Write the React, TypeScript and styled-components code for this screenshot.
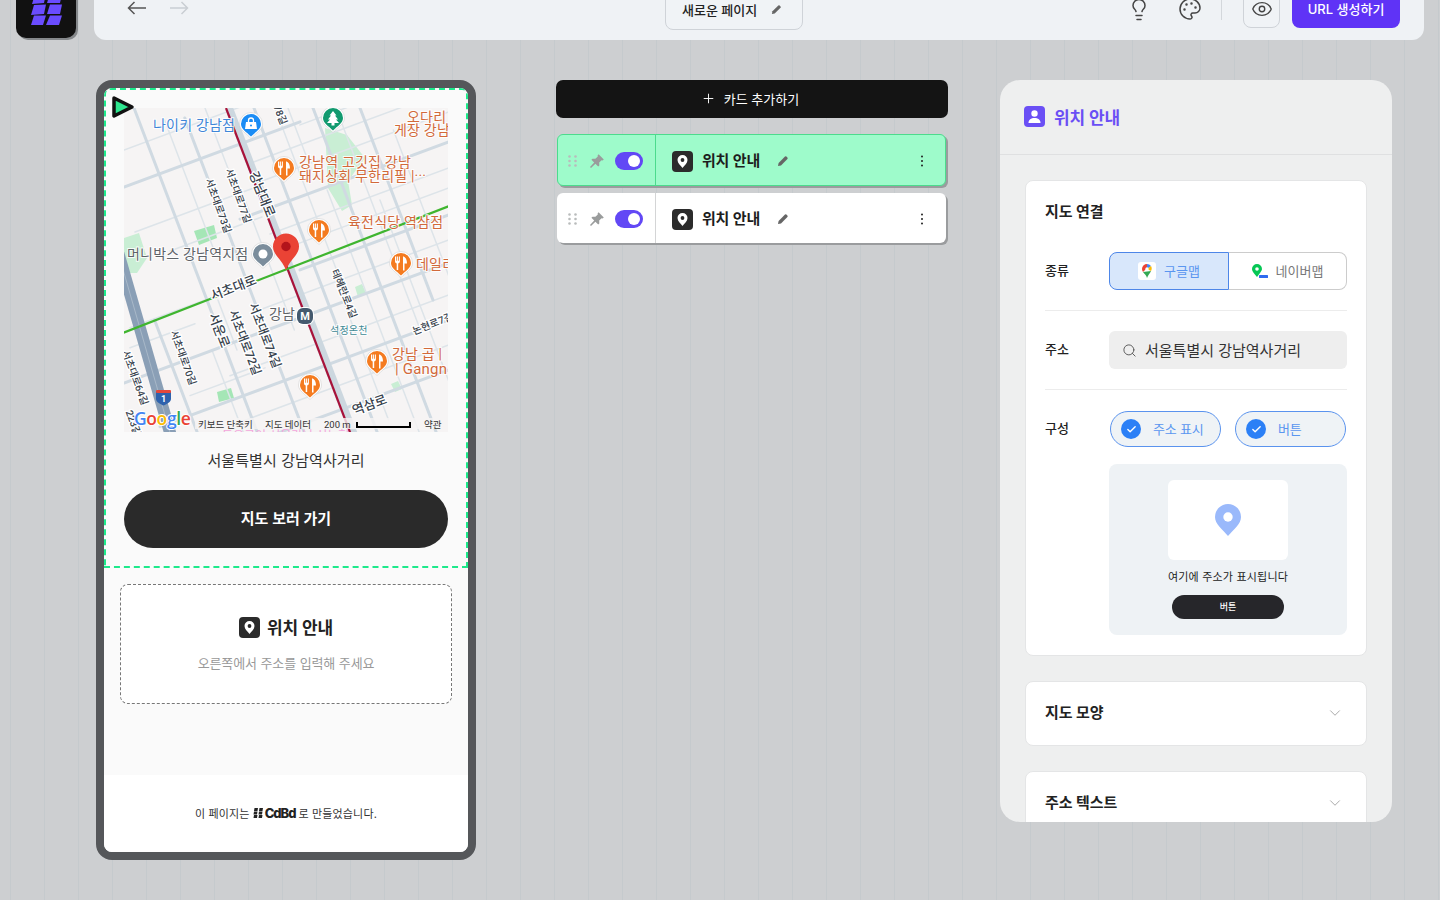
import React from 'react';
import styled, {createGlobalStyle} from 'styled-components';
import {Check, ChevronDown, Eye, Lightbulb, Palette, Plus, Search} from 'lucide-react';

const FONT = `Inter, "Noto Sans CJK KR", "Noto Sans", sans-serif`;
const MAP_FONT = `Roboto, "Noto Sans CJK KR", sans-serif`;

const Global = createGlobalStyle`
  html, body {
    margin: 0;
    padding: 0;
    height: 100%;
    overflow: hidden;
  }
  body {
    font-family: ${FONT};
    color: #222;
  }
  * {
    box-sizing: border-box;
  }
`;

const Page = styled.div`
  width: 1440px;
  height: 900px;
  overflow: hidden;
  background-color: #cdcfd1;
  background-image: linear-gradient(90deg, #c5cacd 1px, transparent 1px);
  background-size: 34px 100%;
  background-position: 10px 0;
`;

const Header = styled.header`
  display: flex;
  gap: 18px;
  height: 60px;
  margin: -20px 16px 0;
`;

const LogoBox = styled.div`
  width: 60px;
  height: 58px;
  flex: none;
  background: #111;
  border-radius: 0 0 10px 10px;
  box-shadow: 2px 2px 0 #85888b;
  svg {
    display: block;
  }
`;

const TopBar = styled.div`
  flex: 1;
  display: flex;
  align-items: flex-start;
  height: 60px;
  padding: 0 24px 0 33px;
  background: #eff2f5;
  border-radius: 0 0 12px 12px;
`;

const Arrows = styled.div`
  display: flex;
  align-items: center;
  gap: 22px;
  width: 62px;
  height: 56px;
  color: #555;
`;

const ArrowGlyph = styled.svg<{$off?: boolean}>`
  flex: none;
  color: ${(p) => (p.$off ? '#c9ced3' : '#555')};
`;

const PageName = styled.button`
  display: flex;
  align-items: center;
  gap: 14px;
  width: 138px;
  height: 50px;
  margin-left: 476px;
  padding: 8px 0 0 16px;
  font: 500 13px ${FONT};
  color: #222;
  background: #f0f3f6;
  border: 1px solid #cfd3d8;
  border-radius: 0 0 8px 8px;
`;

const TopActions = styled.div`
  display: flex;
  align-items: flex-start;
  margin-left: auto;
`;

const ToolSlot = styled.div`
  display: flex;
  align-items: center;
  justify-content: center;
  width: 24px;
  height: 58px;
  margin-right: 27px;
  color: #444;
`;

const ToolDivider = styled.div`
  width: 1px;
  height: 40px;
  margin: 0 21px 0 -8px;
  background: #d3d7db;
`;

const EyeButton = styled.button`
  display: flex;
  align-items: center;
  justify-content: center;
  width: 37px;
  height: 48px;
  padding: 9px 0 0;
  margin-right: 12px;
  color: #444;
  background: #f0f3f6;
  border: 1px solid #cfd3d8;
  border-radius: 0 0 8px 8px;
`;

const UrlButton = styled.button`
  width: 108px;
  height: 48px;
  padding: 8px 0 0;
  font: 500 13px ${FONT};
  color: #fff;
  background: #5f33f6;
  border: 0;
  border-radius: 0 0 8px 8px;
`;

const Workspace = styled.main`
  display: flex;
  align-items: flex-start;
  margin-top: 40px;
  padding-left: 96px;
`;

const LiftedText = styled.span`
  margin-bottom: 2px;
`;

/* phone preview */
const Phone = styled.section`
  display: flex;
  flex-direction: column;
  flex: none;
  width: 380px;
  height: 780px;
  border: 8px solid #55575a;
  border-radius: 16px;
  background: #fafafa;
  overflow: hidden;
`;

const SelectedBlock = styled.div`
  position: relative;
  display: flex;
  flex-direction: column;
  align-items: center;
  height: 480px;
  padding: 18px 18px 0;
  border: 2px dashed #1de98b;
  border-radius: 6px 6px 0 0;
`;

const Handle = styled.svg`
  position: absolute;
  left: 5px;
  top: 5px;
`;

const MapFrame = styled.svg`
  display: block;
  flex: none;
  width: 324px;
  height: 324px;
  background: #f6f4f4;
`;

const PoiText = styled.text<{$c: string; $s?: number}>`
  font-family: ${MAP_FONT};
  font-size: ${(p) => p.$s ?? 14}px;
  letter-spacing: 0.2px;
  fill: ${(p) => p.$c};
  stroke: #fff;
  stroke-width: 2px;
  stroke-opacity: 0.85;
  paint-order: stroke;
`;

const RoadText = styled.text<{$s?: number}>`
  font-family: ${MAP_FONT};
  font-size: ${(p) => p.$s ?? 10}px;
  font-weight: 500;
  fill: #37424d;
  stroke: #fff;
  stroke-width: 2.5px;
  paint-order: stroke;
  text-anchor: middle;
`;

const AttrText = styled.text`
  font-family: ${MAP_FONT};
  font-size: 9.5px;
  fill: #333;
`;

const GoogleMark = styled.text`
  font-family: "Open Sans", "Liberation Sans", sans-serif;
  font-size: 17.5px;
  font-weight: 600;
  letter-spacing: -0.4px;
  stroke: #fff;
  stroke-width: 2px;
  paint-order: stroke;
`;

const AddressLine = styled.p`
  margin: 18px 0 0;
  font-size: 15px;
  line-height: 22px;
  letter-spacing: 0.1px;
  color: #333;
`;

const BigButton = styled.button`
  width: 324px;
  height: 58px;
  margin-top: 18px;
  padding: 0 0 4px;
  font: 600 15px ${FONT};
  color: #fff;
  background: #2a2a2a;
  border: 0;
  border-radius: 29px;
`;

const EmptyCard = styled.div`
  display: flex;
  flex-direction: column;
  align-items: center;
  width: 332px;
  height: 120px;
  margin: 16px auto 0;
  padding-top: 30px;
  background: #fff;
  border: 1px dashed #777;
  border-radius: 8px;
`;

const EmptyTitle = styled.div`
  display: flex;
  align-items: center;
  gap: 7px;
  height: 24px;
  font-size: 17px;
  font-weight: 600;
  letter-spacing: -0.2px;
  color: #222;
`;

const EmptyHint = styled.div`
  margin-top: 15px;
  font-size: 13px;
  line-height: 18px;
  letter-spacing: -0.1px;
  color: #999;
`;

const PhoneFooter = styled.footer`
  display: flex;
  align-items: center;
  justify-content: center;
  gap: 3px;
  height: 77px;
  margin-top: auto;
  padding-bottom: 2px;
  font-size: 11px;
  letter-spacing: 0.15px;
  color: #333;
  background: #fff;
`;

const BrandName = styled.b`
  display: inline-flex;
  align-items: center;
  gap: 1px;
  font-size: 13px;
  font-weight: 800;
  letter-spacing: -1px;
  color: #222;
`;

/* card list */
const CardColumn = styled.section`
  flex: none;
  width: 392px;
  margin-left: 80px;
`;

const AddButton = styled.button`
  display: flex;
  align-items: center;
  justify-content: center;
  gap: 8px;
  width: 100%;
  height: 38px;
  padding: 0 4px 2px 0;
  font: 400 13px ${FONT};
  color: #fff;
  background: #141414;
  border: 0;
  border-radius: 7px;
`;

const CardList = styled.div`
  display: flex;
  flex-direction: column;
  gap: 7px;
  margin: 16px 2px 0 1px;
`;

const BlockCard = styled.div<{$active?: boolean}>`
  display: flex;
  height: ${(p) => (p.$active ? 52 : 50)}px;
  background: ${(p) => (p.$active ? '#9efbcb' : '#fff')};
  border: ${(p) => (p.$active ? '1px solid #4cdb8d' : '0')};
  border-radius: 6px;
  box-shadow: 2px 2px 0 #9a9c9e;
`;

const CardControls = styled.div<{$active?: boolean}>`
  display: flex;
  align-items: center;
  flex: none;
  width: ${(p) => (p.$active ? 98 : 99)}px;
  padding: 2px 0 0 ${(p) => (p.$active ? 10 : 11)}px;
  border-right: 1px solid ${(p) => (p.$active ? '#4cdb8d' : '#d4d5d6')};
`;

const Toggle = styled.div`
  display: flex;
  align-items: center;
  justify-content: flex-end;
  width: 28px;
  height: 18px;
  margin-left: 10px;
  padding: 3px;
  background: #6248f5;
  border-radius: 9px;
  &::after {
    content: '';
    width: 12px;
    height: 12px;
    background: #fff;
    border-radius: 50%;
  }
`;

const CardBody = styled.div<{$active?: boolean}>`
  display: flex;
  align-items: center;
  flex: 1;
  padding: 2px ${(p) => (p.$active ? 21 : 22)}px 0 16px;
`;

const CardTitle = styled.span`
  margin: 0 17px 4px 9px;
  font-size: 15px;
  font-weight: 600;
  letter-spacing: -0.2px;
  color: #1d1d1d;
`;

const Kebab = styled.svg`
  margin-left: auto;
`;

/* right panel */
const Panel = styled.aside`
  flex: none;
  width: 392px;
  height: 742px;
  margin-left: 52px;
  background: #eeefef;
  border-radius: 20px;
  overflow: hidden;
`;

const PanelHead = styled.div`
  display: flex;
  align-items: center;
  gap: 9px;
  height: 75px;
  padding: 0 0 2px 24px;
  font-size: 17px;
  font-weight: 600;
  letter-spacing: -0.2px;
  color: #6a4ff5;
  border-bottom: 1px solid #dfe0e1;
`;

const PanelBody = styled.div`
  display: flex;
  flex-direction: column;
  gap: 25px;
  padding: 25px 25px 0;
`;

const Section = styled.div`
  padding: 0 19px;
  background: #fff;
  border: 1px solid #e4e5e6;
  border-radius: 8px;
`;

const SectionHead = styled.div<{$fold?: boolean}>`
  display: flex;
  align-items: center;
  justify-content: space-between;
  height: ${(p) => (p.$fold ? 63 : 60)}px;
  margin-bottom: ${(p) => (p.$fold ? 0 : 11)}px;
  padding-bottom: ${(p) => (p.$fold ? 4 : 2)}px;
  font-size: 15px;
  font-weight: 600;
  letter-spacing: -0.1px;
  color: #222;
  svg {
    margin: 4px 3px 0 0;
    color: #a2a2a2;
  }
`;

const FieldRow = styled.div`
  display: flex;
  padding-bottom: 20px;
  margin-bottom: 20px;
  border-bottom: 1px solid #ececec;
  &:last-child {
    padding-bottom: 19.5px;
    margin-bottom: 0;
    border-bottom: 0;
  }
`;

const FieldLabel = styled.div`
  flex: none;
  width: 64px;
  font-size: 13px;
  font-weight: 500;
  line-height: 36px;
  color: #222;
`;

const Segments = styled.div`
  display: flex;
  width: 238px;
  height: 38px;
`;

const Segment = styled.div<{$on?: boolean}>`
  display: flex;
  align-items: center;
  justify-content: center;
  gap: 8px;
  width: ${(p) => (p.$on ? 120 : 118)}px;
  font-size: 13px;
  color: ${(p) => (p.$on ? '#5a96f0' : '#777')};
  background: ${(p) => (p.$on ? '#d8e7fb' : '#fff')};
  border: 1px solid ${(p) => (p.$on ? '#4d86e8' : '#ccc')};
  border-left-width: ${(p) => (p.$on ? 1 : 0)}px;
  border-radius: ${(p) => (p.$on ? '8px 0 0 8px' : '0 8px 8px 0')};
`;

const GoogleTile = styled.div`
  display: flex;
  align-items: center;
  justify-content: center;
  width: 18px;
  height: 18px;
  background: #fff;
  border-radius: 3px;
`;

const AddressField = styled.div`
  display: flex;
  align-items: center;
  gap: 8px;
  width: 238px;
  height: 38px;
  padding-left: 13px;
  font-size: 15px;
  color: #333;
  background: #eee;
  border-radius: 6px;
  svg {
    color: #555;
  }
`;

const ConfigColumn = styled.div`
  display: flex;
  flex-direction: column;
  width: 238px;
  padding-top: 1px;
`;

const Pills = styled.div`
  display: flex;
  gap: 14px;
  padding-left: 1px;
`;

const Pill = styled.div`
  display: flex;
  align-items: center;
  gap: 12px;
  width: 111px;
  height: 36px;
  padding-left: 10px;
  font-size: 13px;
  letter-spacing: -0.2px;
  color: #5a96f0;
  background: #eff3f6;
  border: 1px solid #5a93ee;
  border-radius: 18px;
`;

const CheckDot = styled.span`
  display: flex;
  align-items: center;
  justify-content: center;
  width: 20px;
  height: 20px;
  color: #fff;
  background: #2c80f6;
  border-radius: 50%;
`;

const SamplePreview = styled.div`
  display: flex;
  flex-direction: column;
  align-items: center;
  height: 171px;
  margin-top: 17px;
  padding-top: 16px;
  background: #eef2f5;
  border-radius: 8px;
`;

const SampleMap = styled.div`
  display: flex;
  align-items: center;
  justify-content: center;
  width: 120px;
  height: 80px;
  background: #fff;
  border-radius: 6px;
`;

const SampleText = styled.div`
  margin-top: 9px;
  font-size: 11px;
  line-height: 16px;
  letter-spacing: 0.2px;
  color: #222;
`;

const SampleButton = styled.div`
  width: 112px;
  height: 24px;
  margin-top: 10px;
  font-size: 9px;
  font-weight: 500;
  line-height: 24px;
  text-align: center;
  color: #fff;
  background: #26262a;
  border-radius: 12px;
`;

type Seg = [number, number, number, number];

// roads running with the main boulevard, x taken at the top edge of the map
const along = (x: number, y0: number, y1: number): Seg => [x + (y0 - 108) * 0.38, y0, x + (y1 - 108) * 0.38, y1];
// roads crossing it, y taken at the left edge of the map
const across = (y: number, x0: number, x1: number): Seg => [x0, y - (x0 - 124) * 0.37, x1, y - (x1 - 124) * 0.37];

const majorRoads: Seg[] = [
  along(134, 108, 432),
  along(181, 118, 432),
  along(254, 108, 432),
  along(313, 108, 432),
  along(74, 320, 432),
  along(360, 108, 300),
  across(187, 124, 300),
  across(383, 124, 448),
  across(490, 190, 448),
  across(440, 160, 448),
  across(262, 240, 448),
  across(335, 300, 448),
];

const minorRoads: Seg[] = [
  along(160, 120, 250),
  along(205, 108, 200),
  along(210, 200, 330),
  along(275, 108, 280),
  along(288, 108, 170),
  along(296, 190, 432),
  along(336, 108, 330),
  along(270, 300, 420),
  along(345, 200, 432),
  along(385, 130, 320),
  along(120, 350, 432),
  along(145, 300, 350),
  across(150, 124, 250),
  across(236, 135, 260),
  across(268, 170, 262),
  across(210, 250, 448),
  across(232, 262, 448),
  across(288, 270, 448),
  across(308, 290, 448),
  across(360, 260, 448),
  across(415, 230, 448),
  across(465, 240, 448),
  across(330, 130, 205),
  across(350, 130, 195),
  across(420, 190, 265),
  across(190, 300, 448),
  across(168, 330, 448),
  across(150, 340, 448),
];

const parks: {points: string; fill: string}[] = [
  {points: '325,128 347,135 365,158 348,181 352,205 342,211 328,188', fill: '#c9eed4'},
  {points: '124,238 139,233 147,258 137,273 124,273', fill: '#c9eed4'},
  {points: '194,231 214,225 217,238 199,245', fill: '#a5e6b6'},
  {points: '217,392 231,388 234,398 219,402', fill: '#a5e6b6'},
  {points: '355,287 362,284 366,293 358,297', fill: '#c9eed4'},
  {points: '391,384 398,381 402,389 395,392', fill: '#c9eed4'},
];

const forkPins: [number, number][] = [
  [284, 168],
  [319, 230],
  [401, 263],
  [377, 361],
  [310, 385],
];

const rotated: {t: string; x: number; y: number; r: number; s?: number}[] = [
  {t: '서초대로73길', x: 215, y: 207, r: 70},
  {t: '서초대로77길', x: 235, y: 197, r: 70},
  {t: '강남대로', x: 258, y: 196, r: 68, s: 13},
  {t: '서초대로', x: 235, y: 292, r: -21, s: 13},
  {t: '서운로', x: 215, y: 332, r: 69, s: 13},
  {t: '서초대로72길', x: 241, y: 344, r: 69, s: 12},
  {t: '서초대로74길', x: 261, y: 337, r: 69, s: 12},
  {t: '서초대로70길', x: 180, y: 359, r: 70},
  {t: '서초대로64길', x: 132, y: 379, r: 70},
  {t: '테헤란로4길', x: 341, y: 295, r: 68},
  {t: '논현로7길', x: 434, y: 327, r: -22},
  {t: '역삼로', x: 371, y: 409, r: -20, s: 13},
  {t: '78길', x: 277, y: 116, r: 68},
  {t: '223길', x: 130, y: 424, r: 70},
];

function Dots() {
  const cells = [0, 1, 2].flatMap((row) => [0, 1].map((col) => [col, row]));
  return (
    <svg width='9' height='12' viewBox='0 0 9 12'>
      {cells.map(([c, r]) => (
        <circle key={`${c}${r}`} cx={1.5 + c * 6} cy={1.5 + r * 4.5} r='1.3' fill='#b9bcbc' />
      ))}
    </svg>
  );
}

function PinTack() {
  return (
    <svg width='16' height='16' viewBox='0 0 16 16' style={{marginLeft: 12}}>
      <path
        d='M9.6 1.2l5.2 5.2-1.2 1-1-.2-2.4 2.4.1 2.9-1.1 1.1-2.8-2.8L2 15l-1-1 4.2-4.4-2.8-2.8 1.1-1.1 2.9.1 2.4-2.4-.2-1z'
        fill='#9a9c9c'
      />
    </svg>
  );
}

function Pencil({size = 12, color = '#666'}: {size?: number; color?: string}) {
  return (
    <svg width={size} height={size} viewBox='0 0 12 12'>
      <path d='M1 11l.6-3L8 1.6a1 1 0 0 1 1.4 0l1 1a1 1 0 0 1 0 1.4L4 10.4z' fill={color} />
    </svg>
  );
}

function LocationTile() {
  return (
    <svg width='21' height='21' viewBox='0 0 21 21' style={{flex: 'none'}}>
      <rect width='21' height='21' rx='4' fill='#2b2b2b' />
      <path d='M10.5 4a5 5 0 0 0-5 5c0 3 3 5.500 5 8 2-2.500 5-5 5-8a5 5 0 0 0-5-5z' fill='#fff' />
      <circle cx='10.500' cy='9' r='1.900' fill='#2b2b2b' />
    </svg>
  );
}

function PoiPin({x, y, color, children}: {x: number; y: number; color: string; children?: React.ReactNode}) {
  return (
    <g transform={`translate(${x} ${y})`}>
      <path d='M-11.500 0a11.500 11.500 0 1 1 23 0c0 6-6.500 9-11.500 14.500c-5-5.500-11.500-8.500-11.500-14.500z' fill='#fff' stroke='#c8c8c8' strokeWidth='.5' />
      <path d='M-10 0a10 10 0 1 1 20 0c0 5-5.500 8-10 12.500c-4.500-4.500-10-7.500-10-12.500z' fill={color} />
      {children}
    </g>
  );
}

function ForkKnife() {
  return (
    <g fill='#fff'>
      <path d='M-6-6.500v5a2 2 0 0 0 1.700 2v6.500h1.500v-6.500a2 2 0 0 0 1.700-2v-5h-1v4.200h-.8v-4.200h-1v4.200h-.8v-4.200z' />
      <path d='M2-6.800c2.800 1 4 3.500 4 7.300h-2.500v7h-1.500z' />
    </g>
  );
}

function StreetMap() {
  return (
    <MapFrame viewBox='124 108 324 324'>
      {parks.map((p) => (
        <polygon key={p.points} points={p.points} fill={p.fill} />
      ))}
      <g stroke='#dde4e9' strokeWidth='1.500' strokeLinecap='round'>
        {minorRoads.map((r, i) => (
          <line key={i} x1={r[0]} y1={r[1]} x2={r[2]} y2={r[3]} />
        ))}
      </g>
      <g stroke='#d0dae2' strokeWidth='3' strokeLinecap='round'>
        {majorRoads.map((r, i) => (
          <line key={i} x1={r[0]} y1={r[1]} x2={r[2]} y2={r[3]} />
        ))}
      </g>
      <line x1='118' y1='252' x2='171' y2='436' stroke='#8a9fb6' strokeWidth='12' />
      <line x1='118' y1='252' x2='171' y2='436' stroke='#a8b8c8' strokeWidth='1' />
      <line x1='229' y1='108' x2='356' y2='440' stroke='#ccd7df' strokeWidth='8' />
      <line x1='226' y1='108' x2='353' y2='440' stroke='#a8123a' strokeWidth='2.200' />
      <line x1='120' y1='334' x2='452' y2='205' stroke='#3fb52f' strokeWidth='2.200' />

      {rotated.map((r) => (
        <RoadText key={r.t} $s={r.s} transform={`translate(${r.x} ${r.y}) rotate(${r.r})`}>
          {r.t}
        </RoadText>
      ))}

      <PoiText x='153' y='130' $c='#3f86d8'>나이키 강남점</PoiText>
      <PoiText x='407' y='122' $c='#d2693a'>오다리</PoiText>
      <PoiText x='394' y='135' $c='#d2693a'>게장 강남</PoiText>
      <PoiText x='299' y='167' $c='#d2693a'>강남역 고깃집 강남</PoiText>
      <PoiText x='299' y='181' $c='#d2693a'>돼지상회 무한리필 |···</PoiText>
      <PoiText x='348' y='227' $c='#d2693a'>육전식당 역삼점</PoiText>
      <PoiText x='416' y='269' $c='#d2693a'>데일리</PoiText>
      <PoiText x='127' y='259' $c='#5f6368'>머니박스 강남역지점</PoiText>
      <PoiText x='269' y='319' $c='#5f6368'>강남</PoiText>
      <PoiText x='330' y='334' $c='#3f8a95' $s={10}>석정온천</PoiText>
      <PoiText x='392' y='359' $c='#d2693a'>강남 곱 |</PoiText>
      <PoiText x='395' y='374' $c='#d2693a' $s={15}>| Gangn</PoiText>

      <PoiPin x={251} y={124} color='#1a8cf5'>
        <path d='M-5-2h10l1 7h-12z' fill='#fff' />
        <path d='M-2.500-2v-1.500a2.500 2.500 0 0 1 5 0v1.500' fill='none' stroke='#fff' strokeWidth='1.300' />
        <circle cy='1.500' r='1' fill='#1a8cf5' />
      </PoiPin>
      <PoiPin x={333} y={118} color='#129a6f'>
        <path d='M0-7l3.500 4.500h-1.500l3 4h-2l3 3.500h-4.500v2.500h-3v-2.500h-4.500l3-3.500h-2l3-4h-1.500z' fill='#fff' />
      </PoiPin>
      {forkPins.map(([x, y]) => (
        <PoiPin key={x} x={x} y={y} color='#f47b20'>
          <ForkKnife />
        </PoiPin>
      ))}
      <PoiPin x={263} y={254} color='#7b8d9c'>
        <circle r='4.500' fill='#fff' />
      </PoiPin>

      <path d='M286 233.500a13 13 0 0 0-13 13c0 9 9.500 13 13 24c3.500-11 13-15 13-24a13 13 0 0 0-13-13z' fill='#ea4335' />
      <circle cx='286' cy='246.500' r='4.700' fill='#b3141b' />

      <rect x='296' y='307' width='18' height='18' rx='7' fill='#fff' />
      <rect x='297' y='308' width='16' height='16' rx='6' fill='#44596e' />
      <text x='305' y='320' textAnchor='middle' fontFamily={MAP_FONT} fontSize='11' fontWeight='700' fill='#fff'>
        M
      </text>

      <path d='M156 391h15v8c0 3-4 5-7.500 6.500c-3.500-1.500-7.500-3.500-7.500-6.500z' fill='#2e62ad' />
      <rect x='156' y='390' width='15' height='3' rx='1' fill='#e4483b' />
      <text x='163.500' y='402' textAnchor='middle' fontFamily={MAP_FONT} fontSize='9' fontWeight='700' fill='#fff'>
        1
      </text>

      <text x='222' y='440' fontFamily={MAP_FONT} fontSize='12' fill='#f3a6dc'>
        돈유구이 서울강남 신논현
      </text>
      <rect x='195' y='418' width='253' height='11' fill='#f6f4f4' fillOpacity='.8' />
      <GoogleMark x='134' y='425'>
        <tspan fill='#4285f4'>G</tspan>
        <tspan fill='#ea4335'>o</tspan>
        <tspan fill='#fbbc05'>o</tspan>
        <tspan fill='#4285f4'>g</tspan>
        <tspan fill='#34a853'>l</tspan>
        <tspan fill='#ea4335'>e</tspan>
      </GoogleMark>
      <AttrText x='198' y='428'>키보드 단축키</AttrText>
      <AttrText x='265' y='428'>지도 데이터</AttrText>
      <AttrText x='324' y='428'>200 m</AttrText>
      <path d='M357 422v5h53v-5' fill='none' stroke='#000' strokeWidth='2' />
      <AttrText x='424' y='428'>약관</AttrText>
    </MapFrame>
  );
}

function ChoiceCard({active}: {active?: boolean}) {
  return (
    <BlockCard $active={active}>
      <CardControls $active={active}>
        <Dots />
        <PinTack />
        <Toggle />
      </CardControls>
      <CardBody $active={active}>
        <LocationTile />
        <CardTitle>위치 안내</CardTitle>
        <Pencil />
        <Kebab width='4' height='14' viewBox='0 0 4 14'>
          <circle cx='2' cy='2.500' r='1' fill='#222' />
          <circle cx='2' cy='7' r='1' fill='#222' />
          <circle cx='2' cy='11.500' r='1' fill='#222' />
        </Kebab>
      </CardBody>
    </BlockCard>
  );
}

export default function App() {
  return (
    <Page>
      <Global />
      <Header>
        <LogoBox>
          <svg width='60' height='58' viewBox='16 -20 60 58'>
            <g fill='#6a4cff'>
              <polygon points='35,-6 46,-7 44,3 32,4' />
              <polygon points='50,-7 62,-6 60,3 47,3' />
              <polygon points='34,5 46,4.500 44,14 31,15' />
              <polygon points='50,4.500 62,4.500 60,14 47,14' />
              <polygon points='34,15.500 46,15.500 43,25 31,25' />
              <polygon points='50,15.500 62,15.500 59,25 46,25' />
            </g>
          </svg>
        </LogoBox>
        <TopBar>
          <Arrows>
            <ArrowGlyph width='20' height='14' viewBox='0 0 20 14' fill='none' stroke='currentColor' strokeWidth='1.500'>
              <path d='M19 7H1.500M7.500 1L1.500 7l6 6' />
            </ArrowGlyph>
            <ArrowGlyph $off width='20' height='14' viewBox='0 0 20 14' fill='none' stroke='currentColor' strokeWidth='1.500'>
              <path d='M1 7h17.500M12.500 1l6 6-6 6' />
            </ArrowGlyph>
          </Arrows>
          <PageName>
            새로운 페이지
            <Pencil size={11} />
          </PageName>
          <TopActions>
            <ToolSlot>
              <Lightbulb size={25} strokeWidth={1.5} />
            </ToolSlot>
            <ToolSlot>
              <Palette size={24} strokeWidth={1.5} />
            </ToolSlot>
            <ToolDivider />
            <EyeButton>
              <Eye size={22} strokeWidth={1.5} />
            </EyeButton>
            <UrlButton>URL 생성하기</UrlButton>
          </TopActions>
        </TopBar>
      </Header>

      <Workspace>
        <Phone>
          <SelectedBlock>
            <Handle width='24' height='24' viewBox='0 0 24 24'>
              <path d='M3 3L21 12L3 21z' fill='#2ee68f' stroke='#111' strokeWidth='3.500' strokeLinejoin='round' />
            </Handle>
            <StreetMap />
            <AddressLine>서울특별시 강남역사거리</AddressLine>
            <BigButton>지도 보러 가기</BigButton>
          </SelectedBlock>
          <EmptyCard>
            <EmptyTitle>
              <LocationTile />
              <LiftedText>위치 안내</LiftedText>
            </EmptyTitle>
            <EmptyHint>오른쪽에서 주소를 입력해 주세요</EmptyHint>
          </EmptyCard>
          <PhoneFooter>
            이 페이지는
            <BrandName>
              <svg width='11' height='10' viewBox='0 0 11 10'>
                <path d='M1.500 0h3.500L4.500 3H1zM6.500 0H10L9.500 3H6zM1 3.500h3.500L4 6.500H.5zM6 3.500h3.500L9 6.500H5.500zM1 7h3.500L4 10H.5zM6 7h3.500L9 10H5.500z' fill='#222' />
              </svg>
              CdBd
            </BrandName>
            로 만들었습니다.
          </PhoneFooter>
        </Phone>

        <CardColumn>
          <AddButton>
            <Plus size={15} strokeWidth={1.5} />
            카드 추가하기
          </AddButton>
          <CardList>
            <ChoiceCard active />
            <ChoiceCard />
          </CardList>
        </CardColumn>

        <Panel>
          <PanelHead>
            <svg width='21' height='21' viewBox='0 0 21 21'>
              <rect width='21' height='21' rx='4' fill='#6a4ff5' />
              <circle cx='10.500' cy='7.500' r='3.200' fill='#fff' />
              <path d='M4.500 17c0-3.500 2.500-5 6-5s6 1.500 6 5z' fill='#fff' />
            </svg>
            위치 안내
          </PanelHead>
          <PanelBody>
            <Section>
              <SectionHead>지도 연결</SectionHead>
              <FieldRow>
                <FieldLabel>종류</FieldLabel>
                <Segments>
                  <Segment $on>
                    <GoogleTile>
                      <svg width='10' height='14' viewBox='0 0 10 14'>
                        <path d='M5 0a5 5 0 0 0-5 5c0 1.200.4 2 1 3l4-4z' fill='#ea4335' />
                        <path d='M5 0a5 5 0 0 1 4 2L5 5z' fill='#4285f4' />
                        <path d='M9 2a5 5 0 0 1 0 5L5 5z' fill='#fbbc05' />
                        <path d='M1 8l8-1c-1 2.500-3 4-4 7-.5-2.500-2.500-4-4-6z' fill='#34a853' />
                        <circle cx='5' cy='5' r='1.700' fill='#fff' />
                      </svg>
                    </GoogleTile>
                    <LiftedText>구글맵</LiftedText>
                  </Segment>
                  <Segment>
                    <svg width='16' height='14' viewBox='0 0 16 14'>
                      <path d='M5 0a5 5 0 0 0-5 5c0 3 3 5 5 8 1-1.500 2-2.500 3-4 .8-1.200 2-2.500 2-4a5 5 0 0 0-5-5z' fill='#06c755' />
                      <circle cx='5' cy='5' r='1.800' fill='#fff' />
                      <rect x='7' y='11' width='9' height='3' rx='.5' fill='#2f6bf0' />
                    </svg>
                    <LiftedText>네이버맵</LiftedText>
                  </Segment>
                </Segments>
              </FieldRow>
              <FieldRow>
                <FieldLabel>주소</FieldLabel>
                <AddressField>
                  <Search size={15} strokeWidth={1.5} />
                  <LiftedText>서울특별시 강남역사거리</LiftedText>
                </AddressField>
              </FieldRow>
              <FieldRow>
                <FieldLabel>구성</FieldLabel>
                <ConfigColumn>
                  <Pills>
                    <Pill>
                      <CheckDot>
                        <Check size={11} strokeWidth={3} />
                      </CheckDot>
                      <LiftedText>주소 표시</LiftedText>
                    </Pill>
                    <Pill>
                      <CheckDot>
                        <Check size={11} strokeWidth={3} />
                      </CheckDot>
                      <LiftedText>버튼</LiftedText>
                    </Pill>
                  </Pills>
                  <SamplePreview>
                    <SampleMap>
                      <svg width='26' height='32' viewBox='0 0 26 32'>
                        <path d='M13 0a13 13 0 0 0-13 13c0 7 7 12 13 19 6-7 13-12 13-19a13 13 0 0 0-13-13z' fill='#9ab9fb' />
                        <circle cx='13' cy='13' r='4.700' fill='#fff' />
                      </svg>
                    </SampleMap>
                    <SampleText>여기에 주소가 표시됩니다</SampleText>
                    <SampleButton>버튼</SampleButton>
                  </SamplePreview>
                </ConfigColumn>
              </FieldRow>
            </Section>
            <Section>
              <SectionHead $fold>
                지도 모양
                <ChevronDown size={18} strokeWidth={1.2} />
              </SectionHead>
            </Section>
            <Section>
              <SectionHead $fold>
                주소 텍스트
                <ChevronDown size={18} strokeWidth={1.2} />
              </SectionHead>
            </Section>
          </PanelBody>
        </Panel>
      </Workspace>
    </Page>
  );
}
